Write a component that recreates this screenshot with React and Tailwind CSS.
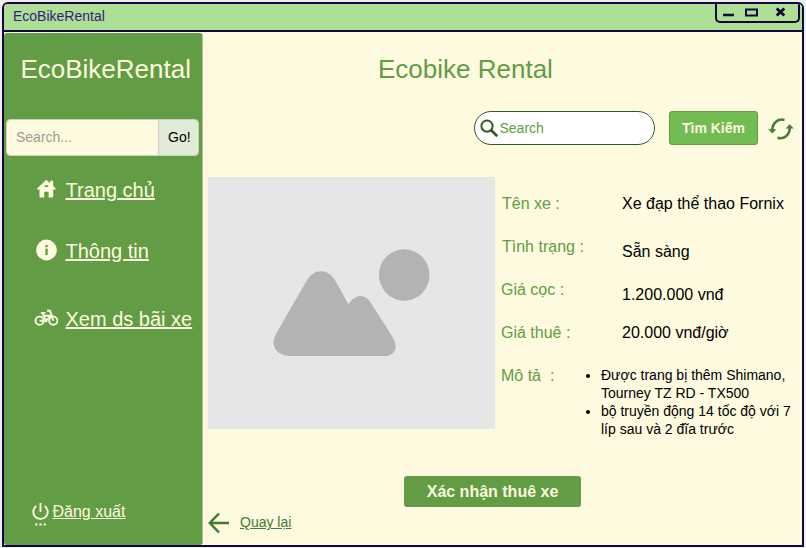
const navItems = [
  { label: 'Trang chủ', icon: HomeIcon, box: 'h-[61px]' },
  { label: 'Thông tin', icon: InfoIcon, box: 'h-[68px]' },
  { label: 'Xem ds bãi xe', icon: BikeIcon, box: 'h-[61px]' },
];

const details = [
  { label: 'Tên xe :', value: 'Xe đạp thể thao Fornix', pad: 'pt-0', shift: 'ml-0 w-[120px]' },
  { label: 'Tình trạng :', value: 'Sẵn sàng', pad: 'pt-[5px]', shift: 'ml-0 w-[120px]' },
  { label: 'Giá cọc :', value: '1.200.000 vnđ', pad: 'pt-[5px]', shift: '-ml-px w-[121px]' },
  { label: 'Giá thuê :', value: '20.000 vnđ/giờ', pad: 'pt-0', shift: '-ml-px w-[121px]' },
];

function HomeIcon() {
  return (
    <svg className="mt-px" width="24" height="24" viewBox="0 0 24 24" fill="#fdfadf">
      <path fillRule="evenodd" d="M12.300 2.800 3 11.500V12.500H5.500V19.200Q5.500 20.500 6.800 20.500H10.200V14.800H14.600V20.500H17.900Q19.200 20.500 19.200 19.200V12.500H21.700V11.500L19.200 9V3.800H16.200V6.300ZM10.400 9.900A2 2 0 0 1 14.400 9.900Z" />
    </svg>
  );
}

function InfoIcon() {
  return (
    <svg className="mt-px" width="24" height="24" viewBox="0 0 24 24">
      <circle cx="12.500" cy="12" r="10.400" fill="#fdfadf" />
      <path d="M11.400 7h2.300v2.200H11.400zM11.400 10.600H13.700V17H11.400z" fill="#629c44" />
    </svg>
  );
}

function BikeIcon() {
  return (
    <svg className="mt-px" width="25" height="24" viewBox="0 0 25 24" fill="none" stroke="#fdfadf" strokeWidth="1.900">
      <circle cx="5.600" cy="14.700" r="4.100" />
      <circle cx="19.300" cy="14.700" r="4.100" />
      <path d="M5.600 14.700H12L17.300 9.700H9.600L12 14.700M9.600 9.700 8.600 7.400M6.800 6.900H11.500M19.300 14.700 16 4.700H13" />
      <circle cx="12" cy="14.700" r="1.500" fill="#fdfadf" stroke="none" />
    </svg>
  );
}

function PowerIcon() {
  return (
    <svg width="17" height="24" viewBox="0 0 17 24" fill="none" stroke="#fdfadf" strokeWidth="1.900">
      <path d="M8.500 0V9M4.300 3A7.200 7.200 0 1 0 12.700 3" />
      <path d="M3.200 21.500h2.200M7.400 21.500h2.200M11.600 21.500h2.200" strokeWidth="2" />
    </svg>
  );
}

function SyncIcon() {
  return (
    <svg width="26" height="22" viewBox="0 0 26 22" fill="none" stroke="#4a7d35" strokeWidth="2.600">
      <path d="M16.500 1.900C10 .2 4.300 5 4.300 12M9.500 19.700C16 21.800 21.700 17 21.700 10" />
      <path d="M.2 11.200H8.400L4.300 15.400ZM17.600 10.600H25.800L21.700 6.300Z" fill="#4a7d35" stroke="none" />
    </svg>
  );
}

function TitleBar() {
  return (
    <header className="flex h-7 justify-between border-b-2 border-[#160640] bg-[#addf94]">
      <span className="pl-[9px] text-sm leading-6 text-[#391b82]">EcoBikeRental</span>
      <div className="mr-0.5 h-[19px] w-[85px] rounded-b-[5px] border-x-2 border-b-2 border-[#160640]">
        <svg width="81" height="17" viewBox="0 0 81 17" fill="none" stroke="#160640">
          <path d="M6 11H17" strokeWidth="2.600" />
          <rect x="29" y="5.500" width="11" height="6" strokeWidth="2" />
          <path d="M59.700 4.400 67.300 11.600M67.300 4.400 59.700 11.600" strokeWidth="2.800" />
        </svg>
      </div>
    </header>
  );
}

function Sidebar() {
  return (
    <aside className="mt-px flex h-[512px] w-[199px] shrink-0 flex-col rounded-[3px] border-r border-[#a9c78f] bg-[#629c44] text-[#fdfadf]">
      <h1 className="mt-5 pl-[16.400px] text-[26px] leading-8 whitespace-nowrap">EcoBikeRental</h1>
      <div className="mt-[34px] ml-[2px] flex h-[37px] w-[193px] overflow-hidden rounded border border-[#cdd3bb] text-sm leading-[35px]">
        <span className="grow bg-[#fdfadf] pl-[9px] text-[#9c9c97]">Search...</span>
        <span className="w-10 border-l border-[#cccccc] bg-[#e0ecd7] pl-[9px] text-black">Go!</span>
      </div>
      <nav className="mt-5 text-xl">
        {navItems.map(({ label, icon: Icon, box }) => (
          <a key={label} className={`flex items-start pl-[30px] ${box}`}>
            <span className="w-[31.500px]">
              <Icon />
            </span>
            <span className="leading-[28px] whitespace-nowrap underline">{label}</span>
          </a>
        ))}
      </nav>
      <a className="mt-auto mb-[18px] flex items-start pl-7">
        <PowerIcon />
        <span className="ml-[3.500px] text-base leading-[18px] underline">Đăng xuất</span>
      </a>
    </aside>
  );
}

function SearchRow() {
  return (
    <div className="mt-[26px] flex h-[34px] items-center pl-[271px]">
      <div className="flex h-[34px] w-[181px] items-center rounded-full border border-[#345a24] bg-white pl-[5px] text-sm text-[#629c44]">
        <svg width="19" height="19" viewBox="0 0 19 19" fill="none" stroke="#345a24" strokeWidth="2">
          <circle cx="7" cy="7.100" r="5.600" />
          <path d="M11 11 17.300 17.200" strokeWidth="2.600" />
        </svg>
        <span className="ml-[0.500px]">Search</span>
      </div>
      <button className="ml-3.5 h-[34px] w-[89px] rounded-[3px] border border-[#629c44] bg-[#73bb53] text-sm font-bold text-[#fdfadf]">
        Tìm Kiếm
      </button>
      <div className="ml-2.5 pt-0.5">
        <SyncIcon />
      </div>
    </div>
  );
}

function Placeholder() {
  return (
    <svg className="shrink-0 bg-[#e6e6e6]" width="287" height="252" viewBox="0 0 287 252" fill="#b3b3b3">
      <path d="M98.500 104C106 91 120 91 127.500 104L140.500 127.500C147 117 156.500 116 163 126L184.500 160C191 171 187 179 176 179H84C68 179 61.500 169 68.500 156Z" />
      <ellipse cx="196.200" cy="98" rx="25.300" ry="25.800" />
    </svg>
  );
}

function Details() {
  return (
    <div className="ml-[7px] w-[300px] pt-[18px] text-base leading-[18px]">
      {details.map(({ label, value, pad, shift }) => (
        <div key={label} className="flex h-[43px]">
          <span className={`text-[#629c44] ${shift}`}>{label}</span>
          <span className={`whitespace-nowrap text-black ${pad}`}>{value}</span>
        </div>
      ))}
      <div className="-ml-px flex">
        <span className="w-[100px] shrink-0 whitespace-pre text-[#629c44]">{'Mô tả  :'}</span>
        <ul className="-mt-px list-outside list-disc text-sm leading-[18px] text-black">
          <li>Được trang bị thêm Shimano,<br />Tourney TZ RD - TX500</li>
          <li>bộ truyền động 14 tốc độ với 7<br />líp sau và 2 đĩa trước</li>
        </ul>
      </div>
    </div>
  );
}

export default function App() {
  return (
    <div className="h-[548px] w-[806px] overflow-hidden bg-[#efeff0] pt-0.5 pl-0.5 font-['Liberation_Sans',Arial,sans-serif]">
      <div className="h-[545px] w-[802px] overflow-hidden rounded-t-[6px] border-2 border-[#160640] bg-[#fdfadf]">
        <TitleBar />
        <div className="flex">
          <Sidebar />
          <main className="w-[599px] shrink-0">
            <h2 className="mt-[21px] pl-[175px] text-[26px] leading-8 text-[#629c44]">Ecobike Rental</h2>
            <SearchRow />
            <section className="mt-8 flex h-[252px] pl-[5px]">
              <Placeholder />
              <Details />
            </section>
            <button className="mt-[47px] ml-[201px] block h-[31px] w-[177px] rounded-[3px] bg-[#629c44] text-base font-bold text-[#fdfadf]">
              Xác nhận thuê xe
            </button>
            <a className="mt-[5px] flex items-center pl-[5px] text-sm text-[#447a30]">
              <svg width="22" height="22" viewBox="0 0 22 22" fill="none" stroke="#447a30" strokeWidth="2.500">
                <path d="M21 11H2M11 1.500 1.800 11 11 20.500" />
              </svg>
              <span className="-mt-0.5 ml-[10px] leading-5 underline">Quay lại</span>
            </a>
          </main>
        </div>
      </div>
    </div>
  );
}
